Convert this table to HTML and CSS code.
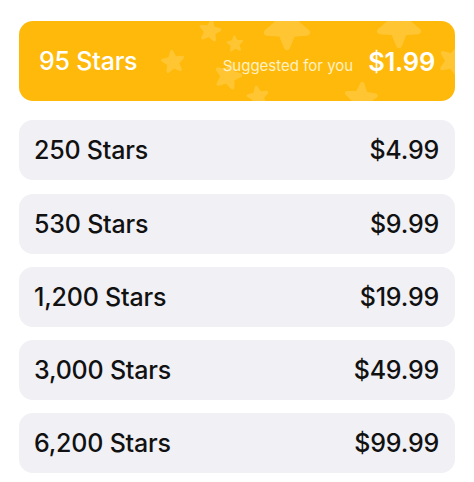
FILE: index.html
```html
<!DOCTYPE html>
<html>
<head>
<meta charset="utf-8">
<link rel="stylesheet" href="styles.css">
</head>
<body>
<div class="list">
  <div class="card featured">
    <svg class="stars" width="436" height="80" viewBox="0 0 436 80" aria-hidden="true">
      <defs>
        <path id="st" d="M0,-10 L2.6,-3.6 L9.5,-3.1 L4.2,1.4 L5.9,8.1 L0,4.5 L-5.9,8.1 L-4.2,1.4 L-9.5,-3.1 L-2.6,-3.6 Z" stroke-linejoin="round"/>
      </defs>
      <g fill="#FFD25A" stroke="#FFD25A" stroke-width="3" opacity="0.5">
        <use href="#st" transform="translate(154,41) rotate(-8) scale(1.05)"/>
        <use href="#st" transform="translate(191,10) rotate(10) scale(1.0)"/>
        <use href="#st" transform="translate(216,23) rotate(-5) scale(0.75)"/>
        <use href="#st" transform="translate(268,5) rotate(180) scale(2.1)"/>
        <use href="#st" transform="translate(209,55) rotate(15) scale(1.25)"/>
        <use href="#st" transform="translate(239,76) rotate(-10) scale(1.0)"/>
        <use href="#st" transform="translate(342,78) rotate(5) scale(1.5)"/>
        <use href="#st" transform="translate(380,4) rotate(180) scale(2.0)"/>
        <use href="#st" transform="translate(434,40) rotate(20) scale(1.3)"/>
      </g>
    </svg>
    <span class="name">95 Stars</span>
    <span class="right"><span class="hint">Suggested for you</span><span class="price">$1.99</span></span>
  </div>
  <div class="card"><span class="name">250 Stars</span><span class="price">$4.99</span></div>
  <div class="card"><span class="name">530 Stars</span><span class="price">$9.99</span></div>
  <div class="card"><span class="name">1,200 Stars</span><span class="price">$19.99</span></div>
  <div class="card"><span class="name">3,000 Stars</span><span class="price">$49.99</span></div>
  <div class="card"><span class="name">6,200 Stars</span><span class="price">$99.99</span></div>
</div>
</body>
</html>
```
FILE: styles.css
```css
html, body {
  margin: 0;
  padding: 0;
  background: #ffffff;
}
body {
  font-family: Inter, "Noto Sans", "Liberation Sans", sans-serif;
  color: #111111;
}
.list {
  display: flex;
  flex-direction: column;
  gap: 13.25px;
  padding: 21px 19px 0 19px;
}
.card {
  position: relative;
  height: 60px;
  border-radius: 14px;
  background: #F0F0F5;
  display: flex;
  align-items: center;
  justify-content: space-between;
  padding: 0 16px 0 15px;
  overflow: hidden;
  font-size: 25px;
  font-weight: 500;
  letter-spacing: -0.2px;
}
.card.featured {
  height: 80px;
  margin-bottom: 6px;
  background: #FFB90B;
  color: #ffffff;
  padding: 0 20px 0 20px;
}
.stars {
  position: absolute;
  left: 0;
  top: 0;
}
.name, .right {
  position: relative;
}
.right {
  display: flex;
  align-items: baseline;
  gap: 15px;
}
.hint {
  font-size: 15px;
  font-weight: 400;
  color: #FFF1C4;
  letter-spacing: 0;
}
.featured .price {
  font-weight: 600;
  font-size: 25.5px;
}
```
